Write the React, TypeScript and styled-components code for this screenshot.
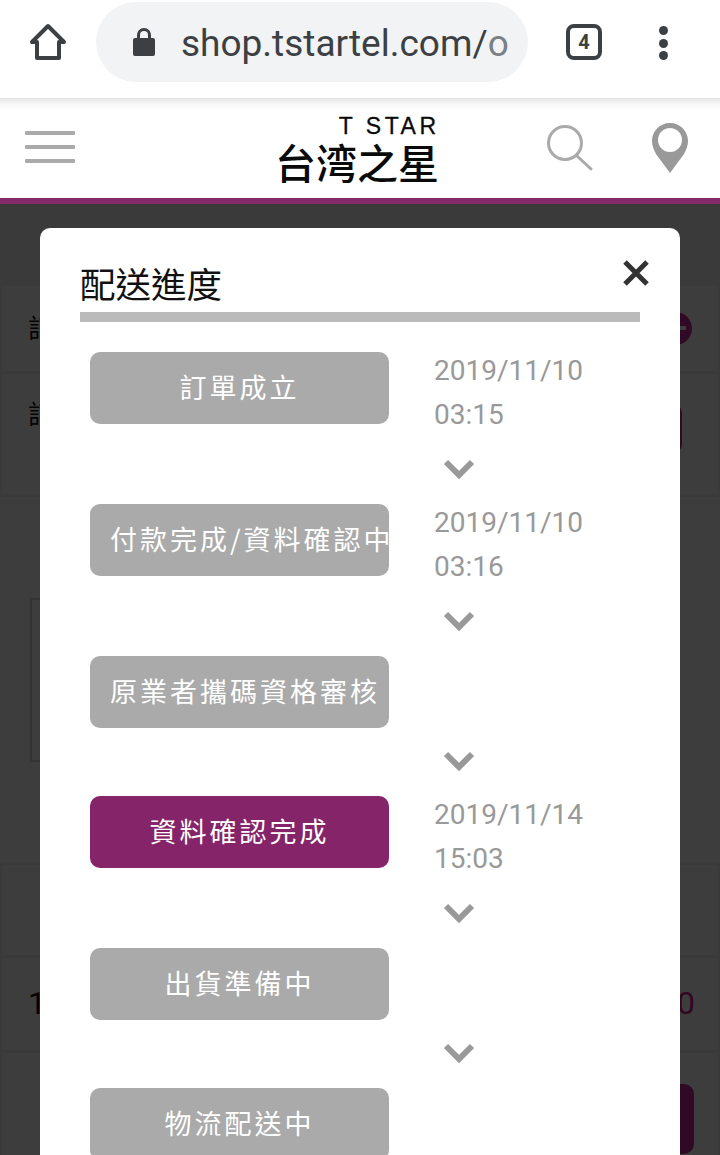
import React from "react";
import styled, { createGlobalStyle } from "styled-components";

const Global = createGlobalStyle`
  html, body { margin: 0; padding: 0; background: #fff; }
  * { box-sizing: border-box; }
`;
const CJK = `"Noto Sans CJK TC", "Noto Sans CJK SC", sans-serif`;

const Screen = styled.div`
  position: relative; width: 720px; height: 1155px; overflow: hidden; background: #fff;
  font-family: Roboto, ${CJK};
`;
const BrowserBar = styled.header`
  height: 98px; display: flex; align-items: flex-start; background: #fff;
`;
const HomeButton = styled.div`
  width: 96px; height: 84px; display: flex; align-items: center; justify-content: center; color: #3c4043;
`;
const UrlPill = styled.div`
  margin-top: 2px; width: 432px; height: 80px; border-radius: 40px; background: #f1f3f4;
  display: flex; align-items: center; padding-left: 36px; color: #3c4043;
`;
const UrlText = styled.span`
  margin: 3px 0 0 25px; font-size: 37px; color: #3c4043; white-space: nowrap;
  span { color: #7b8084; }
`;
const TabCount = styled.div`
  margin: 24px 0 0 38px; width: 36px; height: 36px; border: 4px solid #3c4043; border-radius: 8px;
  display: flex; align-items: center; justify-content: center;
  font: 700 20px Roboto, sans-serif; color: #3c4043;
`;
const MenuDots = styled.div`
  margin: 26px 0 0 57px; display: flex; flex-direction: column; gap: 3.5px;
  i { display: block; width: 9px; height: 9px; border-radius: 50%; background: #3c4043; }
`;
const SiteHeader = styled.div`
  height: 100px; background: linear-gradient(#e2e2e2 0, #f8f8f8 6px, #fff 14px);
  display: flex; align-items: flex-start;
`;
const Burger = styled.div`
  margin: 33px 0 0 25px; width: 50px; display: flex; flex-direction: column; gap: 10px;
  i { display: block; height: 4px; background: #aaa; border-radius: 1px; }
`;
const Logo = styled.div`
  margin: 18px 0 0 203px; width: 160px; height: 70px; display: flex; flex-direction: column; align-items: flex-end;
  color: #0a0a0a;
`;
const LogoEn = styled.span`
  margin-right: -1.5px; font: 400 23px/20px "Liberation Sans", sans-serif; letter-spacing: 3.5px; white-space: nowrap;
  -webkit-text-stroke: 0.3px #0a0a0a;
`;
const LogoZh = styled.span`
  margin: 3px -1px 0 0; font: 500 41px/44px ${CJK}; white-space: nowrap;
`;
const SearchIcon = styled.svg`
  margin: 27px 0 0 109px; width: 46px; height: 46px; flex: none;
`;
const PinIcon = styled.svg`
  margin: 25px 0 0 59px; width: 36px; height: 50px; flex: none;
`;
const AccentBar = styled.div`height: 6px; background: #852a6a;`;

const Behind = styled.main`
  display: flex; flex-direction: column; color: #111; background: #fff;
`;
const RowGroup = styled.div<{ $mt: number; $pt: number }>`
  margin-top: ${p => p.$mt}px; padding: ${p => p.$pt}px 2px 3px; background: #f0f0f0;
  display: flex; flex-direction: column; gap: 3px;
`;
const BgRow = styled.div<{ $h: number; $pt: number }>`
  height: ${p => p.$h}px; background: #fff; display: flex; align-items: flex-start; justify-content: space-between;
  padding: ${p => p.$pt}px 26px 0; font: 400 26px/38px Roboto, ${CJK};
`;
const BgFrame = styled.div`
  margin: 101px 60px 0 30px; height: 164px; border: 2px solid #d4d4d4;
`;
const Big = styled.span`font-size: 32px;`;
const Price = styled.span`margin-right: -3px; font-size: 32px; color: #d0208a;`;
const MinusDot = styled.span`
  position: relative; margin: 2px 0 0 0; width: 33px; height: 33px; border-radius: 50%; background: #c82c96;
  &::after { content: ""; position: absolute; left: 8px; right: 6px; top: 14px; height: 4px; background: #fff; }
`;
const BgButton = styled.span<{ $h: number; $w: number; $mr: number; $mt: number }>`
  width: ${p => p.$w}px; height: ${p => p.$h}px; border-radius: 10px; background: #c82c96;
  margin: ${p => p.$mt}px ${p => p.$mr}px 0 0;
`;
const Overlay = styled.div`
  position: absolute; left: 0; right: 0; top: 204px; bottom: 0; background: rgba(0,0,0,.76);
  padding: 24px 40px 0; overflow: hidden;
`;
const Modal = styled.section`
  position: relative; background: #fff; border-radius: 10px; padding: 32px 40px 0; height: 1200px;
`;
const Title = styled.h2`
  margin: 0; height: 62px; border-bottom: 10px solid #bbb; font: 400 35.5px/46px ${CJK}; color: #111;
`;
const CloseBtn = styled.svg`
  position: absolute; top: 31px; right: 30px; width: 28px; height: 28px;
`;
const Steps = styled.div`padding: 30px 0 0 10px;`;
const StepRow = styled.div<{ $dated: boolean }>`
  display: flex; height: ${p => (p.$dated ? 84 : 72)}px;
`;
const StepBadge = styled.div<{ $active?: boolean }>`
  flex: none; width: 299px; height: 72px; border-radius: 10px; padding: 0 0 0 20px; overflow: hidden;
  background: ${p => (p.$active ? "#852468" : "#aaa")}; color: #fff;
  font: 400 27px/70px ${CJK}; letter-spacing: 3px; white-space: nowrap; text-align: center;
  span { display: inline-block; padding-right: 20px; }
`;
const StepDate = styled.div`
  margin: -3px 0 0 45px; font: 400 28px/44px Roboto, sans-serif; color: #999;
`;
const Arrow = styled.div`
  height: 68px; padding: 22px 0 0 353px;
  svg { display: block; width: 32px; height: 22px; }
`;

const steps = [
  { label: "訂單成立", date: "2019/11/10", time: "03:15" },
  { label: "付款完成/資料確認中", date: "2019/11/10", time: "03:16" },
  { label: "原業者攜碼資格審核" },
  { label: "資料確認完成", date: "2019/11/14", time: "15:03", active: true },
  { label: "出貨準備中" },
  { label: "物流配送中" },
];

export default function App() {
  return (
    <Screen>
      <Global />
      <BrowserBar>
        <HomeButton>
          <svg width="38" height="38" viewBox="0 0 38 38" fill="none" stroke="currentColor" strokeWidth="4" strokeLinejoin="round">
            <path d="M19 3 3 19h5v16h22V19h5Z" />
          </svg>
        </HomeButton>
        <UrlPill>
          <svg width="24" height="30" viewBox="0 0 24 30" fill="currentColor">
            <path d="M3 11h2V8a7 7 0 0 1 14 0v3h2a2 2 0 0 1 2 2v14a2 2 0 0 1-2 2H3a2 2 0 0 1-2-2V13a2 2 0 0 1 2-2Zm5 0h8V8a4 4 0 0 0-8 0Z" />
          </svg>
          <UrlText>shop.tstartel.com/<span>o</span></UrlText>
        </UrlPill>
        <TabCount>4</TabCount>
        <MenuDots><i /><i /><i /></MenuDots>
      </BrowserBar>
      <SiteHeader>
        <Burger><i /><i /><i /></Burger>
        <Logo>
          <LogoEn>T STAR</LogoEn>
          <LogoZh>台湾之星</LogoZh>
        </Logo>
        <SearchIcon viewBox="0 0 46 46" fill="none" stroke="#aaa" strokeWidth="3" strokeLinecap="round">
          <circle cx="18" cy="18" r="16.500" />
          <path d="m30 31 14 13" />
        </SearchIcon>
        <PinIcon viewBox="0 0 36 50">
          <path fillRule="evenodd" fill="#999" d="M18 0C8 0 0 8 0 18c0 5 2 9 4 13l14 19 14-19c2-4 4-8 4-13C36 8 28 0 18 0Zm0 5a12 12 0 1 1 0 24 12 12 0 0 1 0-24Z" />
        </PinIcon>
      </SiteHeader>
      <AccentBar />
      <Behind>
        <RowGroup $mt={0} $pt={82}>
          <BgRow $h={85} $pt={24}><span>訂</span><MinusDot /></BgRow>
          <BgRow $h={120} $pt={22}><span>訂</span><BgButton $w={50} $h={51} $mr={10} $mt={7} /></BgRow>
        </RowGroup>
        <BgFrame />
        <RowGroup $mt={100} $pt={3}>
          <BgRow $h={90} $pt={0} />
          <BgRow $h={92} $pt={26}><Big>1</Big><Price>0</Price></BgRow>
          <BgRow $h={120} $pt={31}><span /><BgButton $w={60} $h={70} $mr={-2} $mt={0} /></BgRow>
        </RowGroup>
      </Behind>
      <Overlay>
        <Modal>
          <Title>配送進度</Title>
          <CloseBtn viewBox="0 0 28 28" stroke="#333" strokeWidth="5">
            <path d="m3 3 22 22M25 3 3 25" />
          </CloseBtn>
          <Steps>
            {steps.map((s, i) => (
              <React.Fragment key={s.label}>
                <StepRow $dated={!!s.date}>
                  <StepBadge $active={s.active}><span>{s.label}</span></StepBadge>
                  {s.date && <StepDate>{s.date}<br />{s.time}</StepDate>}
                </StepRow>
                {i < steps.length - 1 && (
                  <Arrow>
                    <svg viewBox="0 0 32 22" fill="none" stroke="#999" strokeWidth="6"><path d="m3 4 13 13L29 4" /></svg>
                  </Arrow>
                )}
              </React.Fragment>
            ))}
          </Steps>
        </Modal>
      </Overlay>
    </Screen>
  );
}
